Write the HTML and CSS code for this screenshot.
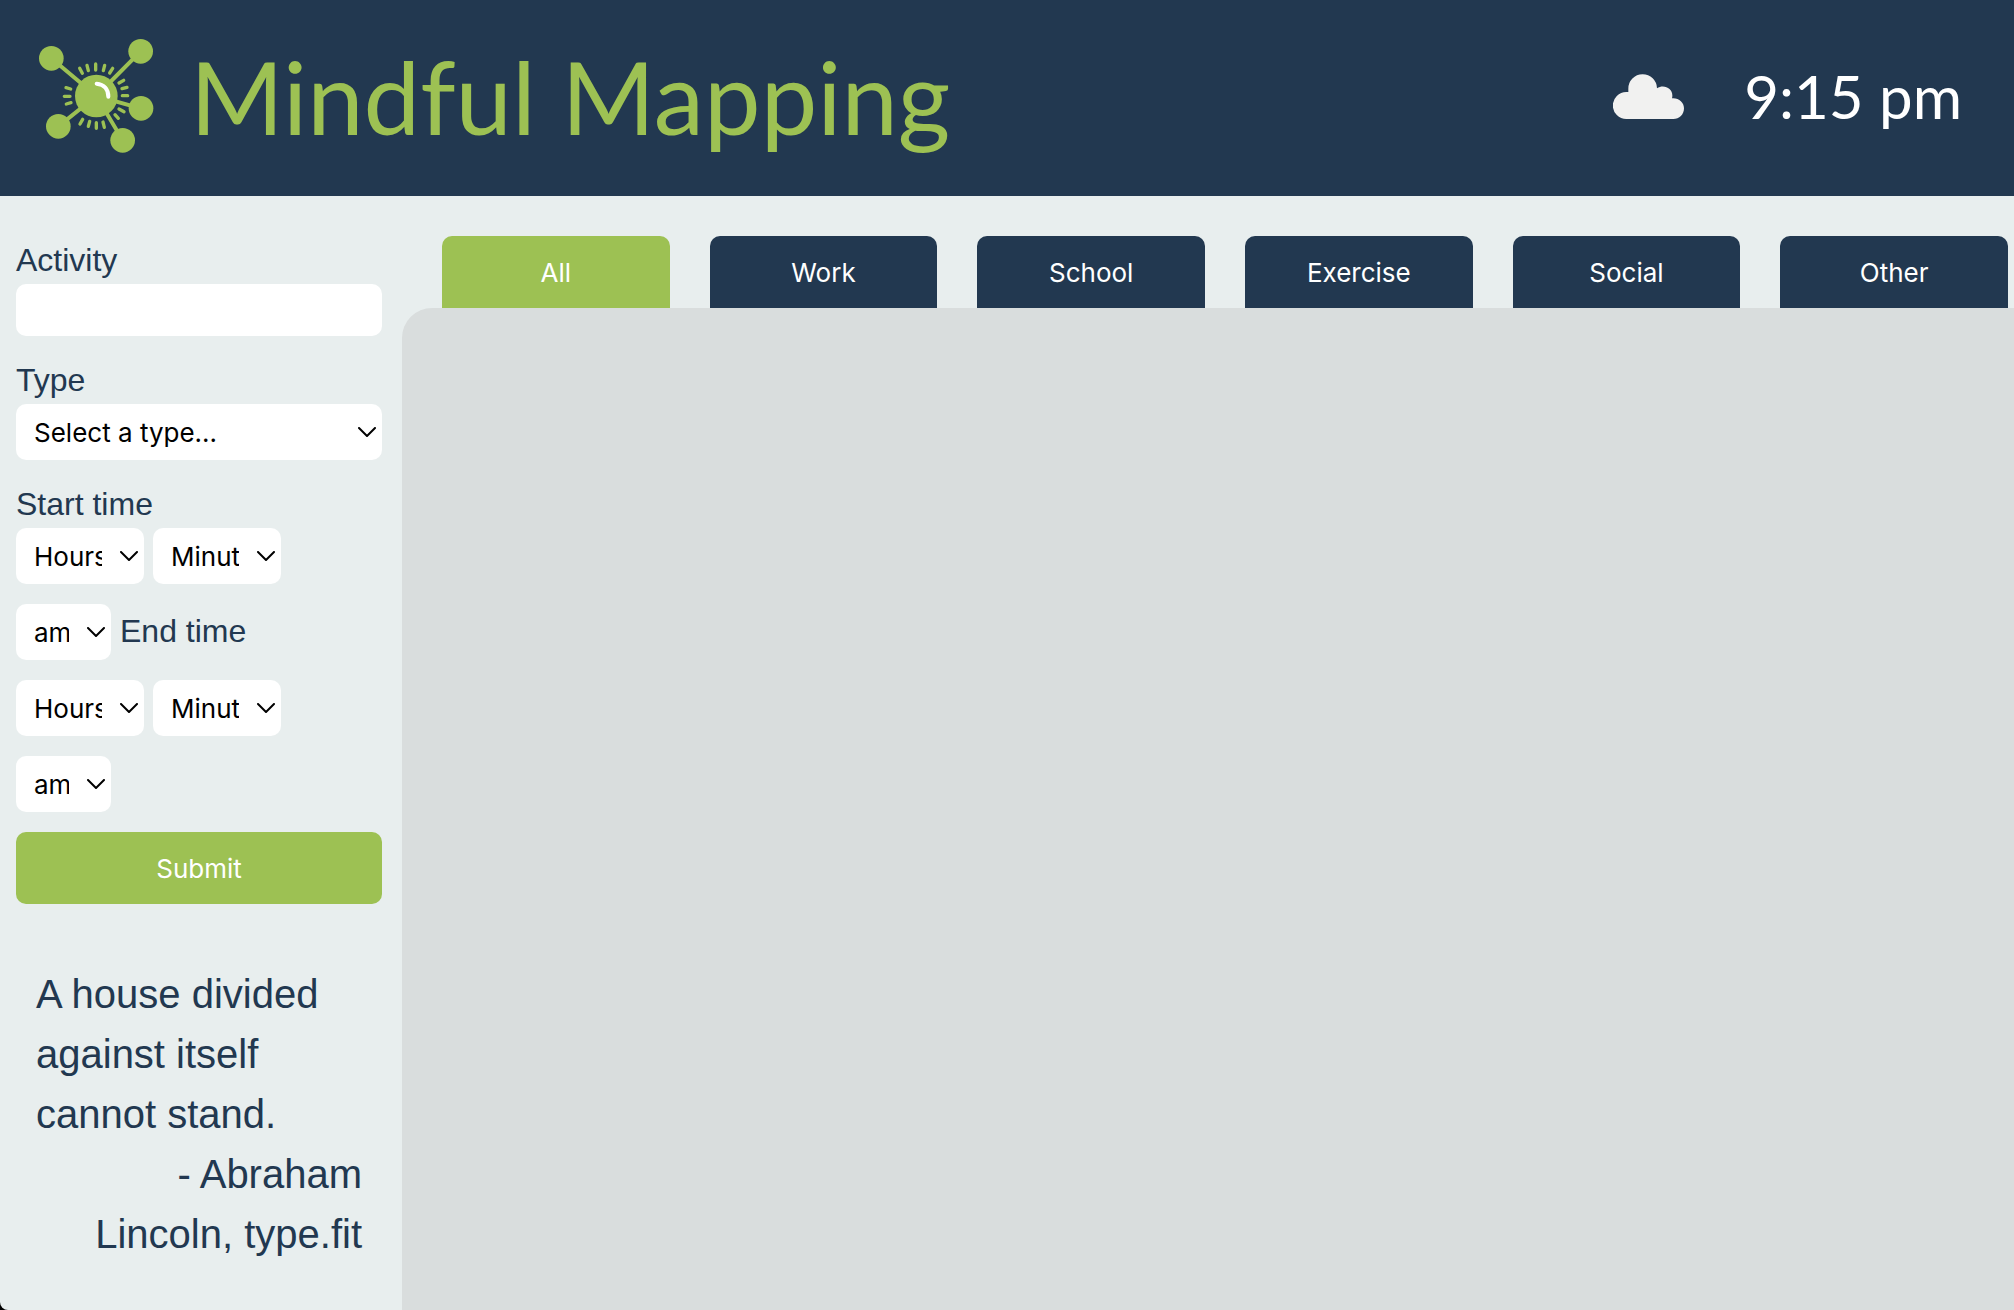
FILE: index.html
```html
<!DOCTYPE html>
<html lang="en">
<head>
  <meta charset="utf-8">
  <meta name="viewport" content="width=device-width, initial-scale=1">
  <title>Mindful Mapping</title>
  <link rel="stylesheet" href="styles.css">
</head>
<body>
  <header class="header">
    <svg class="logo" viewBox="54 54 348 348" aria-hidden="true">
      <g class="logo-links">
        <path d="M94 115 229 228M362 94 229 228M362 265 229 228M308 361 229 228M115 319 229 228"/>
      </g>
      <g class="logo-rays">
        <path d="M179 145l8 15M201 136l4 16M227 132v18M254 136l-4 16M278 145l-9 14M311 181l-14 8M321 202l-15 4M323 227h-16M312 275l-15-8M295 295l-10-11M253 322l-4-16M229 325v-17M205 319l4-15M180 312l8-14M139 252l14-4M133 229h17M138 203l14 4"/>
      </g>
      <g class="logo-nodes">
        <circle cx="94" cy="115" r="37"/>
        <circle cx="362" cy="94" r="37"/>
        <circle cx="363" cy="265" r="37"/>
        <circle cx="308" cy="361" r="37"/>
        <circle cx="115" cy="319" r="37"/>
        <circle cx="229" cy="228" r="64"/>
      </g>
      <path class="logo-shine" d="M230 191C252 193 265 208 265 230"/>
    </svg>
    <h1 class="title">Mindful Mapping</h1>
    <svg class="weather" viewBox="69 72 213 135" role="img" aria-label="Cloudy">
      <path d="M109 207a40 40 0 0 1 0-81h6v-10a43 43 0 0 1 86-1c20-14 46 0 46 21 0 4 0 6-1 9 20-2 36 12 36 30 0 19-14 32-32 32z"/>
    </svg>
    <time class="clock" datetime="21:15">9:15 pm</time>
  </header>
  <div class="layout">
    <aside class="sidebar">
      <form class="form">
        <div class="field">
          <label class="label" for="activity">Activity</label>
          <input class="control" id="activity" type="text">
        </div>
        <div class="field">
          <label class="label" for="type">Type</label>
          <select class="control select" id="type"><option>Select a type...</option></select>
        </div>
        <div class="field">
          <label class="label" for="start-hours">Start time</label>
          <div class="row">
            <select class="control select time" id="start-hours"><option>Hours</option></select>
            <select class="control select time" aria-label="Start minutes"><option>Minutes</option></select>
          </div>
        </div>
        <div class="row">
          <select class="control select period" aria-label="Start am or pm"><option>am</option><option>pm</option></select>
          <label class="label" for="end-hours">End time</label>
        </div>
        <div class="row">
          <select class="control select time" id="end-hours"><option>Hours</option></select>
          <select class="control select time" aria-label="End minutes"><option>Minutes</option></select>
        </div>
        <div class="row">
          <select class="control select period" aria-label="End am or pm"><option>am</option><option>pm</option></select>
        </div>
        <button class="submit" type="button">Submit</button>
      </form>
      <figure class="quote">
        <blockquote class="quote-text">A house divided against itself cannot stand.</blockquote>
        <figcaption class="quote-author">- Abraham<br>Lincoln, type.fit</figcaption>
      </figure>
    </aside>
    <main class="main">
      <nav class="tabs" aria-label="Activity types">
        <button class="tab tab-active" type="button">All</button>
        <button class="tab" type="button">Work</button>
        <button class="tab" type="button">School</button>
        <button class="tab" type="button">Exercise</button>
        <button class="tab" type="button">Social</button>
        <button class="tab" type="button">Other</button>
      </nav>
      <section class="panel" aria-label="Activities"></section>
    </main>
  </div>
</body>
</html>
```

FILE: styles.css
```css
:root {
  --navy: #223850;
  --green: #9dc153;
  --page: #e8eeee;
  --panel: #d9dddd;
}

* {
  box-sizing: border-box;
}

/* A background of its own on html keeps the body's rounded corner visible. */
html {
  background: #000;
}

body {
  margin: 0;
  min-height: 100vh;
  display: flex;
  flex-direction: column;
  background: var(--page);
  border-bottom-left-radius: 8px;
  color: var(--navy);
  font-family: "Liberation Sans", Arial, sans-serif;
  font-size: 32px;
}

.header {
  display: flex;
  align-items: center;
  height: 196px;
  padding: 0 52px 4px 38px;
  background: var(--navy);
  font-family: "Trebuchet MS", Lato, sans-serif;
}

.logo {
  width: 116px;
  height: 116px;
}

.logo-links,
.logo-rays,
.logo-shine {
  fill: none;
  stroke: var(--green);
  stroke-width: 12;
}

.logo-rays {
  stroke-width: 10;
  stroke-linecap: round;
}

.logo-nodes {
  fill: var(--green);
}

.logo-shine {
  stroke: #fff;
  stroke-linecap: round;
}

.title {
  margin: 0 auto 0 36px;
  color: var(--green);
  font-size: 101px;
  font-weight: 400;
  line-height: 120px;
}

.weather {
  width: 71px;
  height: 45px;
  fill: #f1f1f0;
}

.clock {
  margin-left: 60px;
  color: #fff;
  font-size: 60px;
}

.layout {
  flex: 1;
  display: grid;
  grid-template-columns: 402px 1fr;
}

.sidebar {
  padding: 40px 20px 20px 16px;
}

.form {
  display: flex;
  flex-direction: column;
  gap: 20px;
}

.field {
  display: flex;
  flex-direction: column;
}

.label {
  line-height: 48px;
}

.row {
  display: flex;
  align-items: baseline;
  gap: 9px;
}

.control,
.submit,
.tab {
  border: 0;
  font-family: Inter, sans-serif;
  font-size: 26px;
}

.control {
  width: 100%;
  height: 52px;
  padding: 0 18px;
  border-radius: 10px;
  background-color: #fff;
  color: #000;
}

.select {
  height: 56px;
  padding-right: 42px;
  appearance: none;
  background-image: url("data:image/svg+xml,%3Csvg xmlns='http://www.w3.org/2000/svg' width='18' height='10' fill='none' stroke='black' stroke-width='2' stroke-linecap='round' stroke-linejoin='round'%3E%3Cpath d='M1 1l8 8 8-8'/%3E%3C/svg%3E");
  background-position: right 6px center;
  background-repeat: no-repeat;
}

.time {
  width: 128px;
}

.period {
  width: 95px;
}

.submit,
.tab {
  height: 72px;
  background: var(--navy);
  color: #fff;
}

.submit {
  border-radius: 10px;
  background: var(--green);
}

.quote {
  margin: 60px 0 0;
  padding: 0 20px;
  font-size: 40px;
  line-height: 60px;
}

.quote-text {
  margin: 0;
}

.quote-author {
  text-align: right;
}

.main {
  display: flex;
  flex-direction: column;
  padding-top: 40px;
}

.tabs {
  display: grid;
  grid-template-columns: repeat(6, 1fr);
  gap: 40px;
  padding: 0 6px 0 40px;
}

.tab {
  border-radius: 10px 10px 0 0;
}

.tab-active {
  background: var(--green);
}

.panel {
  flex: 1;
  background: var(--panel);
  border-top-left-radius: 30px;
}
```
